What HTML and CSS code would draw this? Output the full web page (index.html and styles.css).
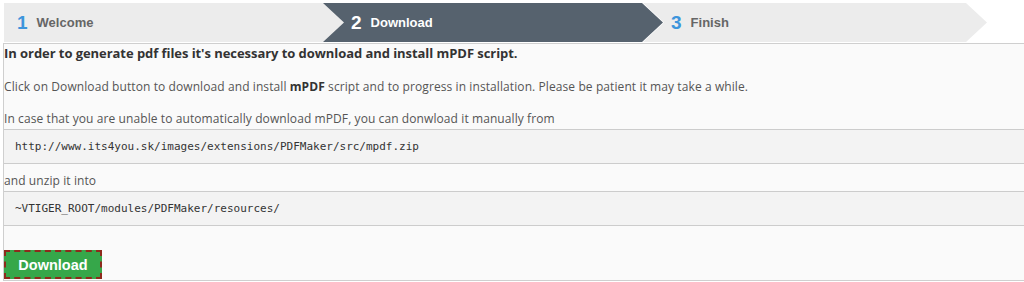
FILE: index.html
```html
<!DOCTYPE html>
<html>
<head>
<meta charset="utf-8">
<link rel="stylesheet" href="styles.css">
</head>
<body>
<div class="steps">
  <div class="step step-first"><span class="num">1</span><span class="label">Welcome</span></div>
  <div class="step step-active"><span class="num">2</span><span class="label">Download</span></div>
  <div class="step step-last"><span class="num">3</span><span class="label">Finish</span></div>
</div>
<div class="panel">
  <p class="lead">In order to generate pdf files it's necessary to download and install mPDF script.</p>
  <p class="txt t2">Click on Download button to download and install <b>mPDF</b> script and to progress in installation. Please be patient it may take a while.</p>
  <p class="txt t3">In case that you are unable to automatically download mPDF, you can donwload it manually from</p>
  <pre class="code">http://www.its4you.sk/images/extensions/PDFMaker/src/mpdf.zip</pre>
  <p class="txt t4">and unzip it into</p>
  <pre class="code">~VTIGER_ROOT/modules/PDFMaker/resources/</pre>
  <div class="actions"><button class="btn">Download</button></div>
</div>
</body>
</html>
```
FILE: styles.css
```css
html, body {
  margin: 0;
  padding: 0;
  background: #ffffff;
}
body {
  padding-top: 3px;
  font-family: "Open Sans", sans-serif;
  color: #555;
  width: 1024px;
  height: 282px;
  overflow: hidden;
}
.steps {
  display: flex;
  height: 39px;
  margin-left: 4px;
}
.step {
  flex: 0 0 340px;
  display: flex;
  align-items: center;
  box-sizing: border-box;
  padding-left: 28px;
  background: #ececec;
  margin-left: -22px;
  clip-path: polygon(0 0, calc(100% - 21px) 0, 100% 50%, calc(100% - 21px) 100%, 0 100%, 21px 50%);
  font-family: "Liberation Sans", Arial, sans-serif;
}
.step-first {
  margin-left: 0;
  padding-left: 13px;
  flex-basis: 341px;
  clip-path: polygon(0 0, calc(100% - 21px) 0, 100% 50%, calc(100% - 21px) 100%, 0 100%);
}
.step-active {
  background: #56626e;
}
.step-last {
  margin-left: -20px;
  flex-basis: 344px;
}
.num {
  font-size: 19px;
  font-weight: bold;
  color: #3d95dc;
  margin-right: 9px;
  line-height: 1;
}
.label {
  font-size: 13px;
  font-weight: bold;
  color: #666;
}
.step-active .num,
.step-active .label {
  color: #ffffff;
}
.panel {
  margin-left: 3px;
  border-left: 1px solid #cfcfcf;
  border-top: 1px solid #cfcfcf;
  border-bottom: 1px solid #cfcfcf;
  background: #fafafa;
  height: 238px;
  margin-top: 1px;
  box-sizing: border-box;
}
.lead {
  margin: 0;
  font-size: 13px;
  line-height: 18px;
  font-weight: bold;
  color: #333;
  letter-spacing: -0.06px;
}
.txt {
  margin: 0;
  font-size: 12px;
  line-height: 18px;
  color: #555;
  letter-spacing: 0.09px;
}
.txt b {
  color: #333;
}
.t2 { margin-top: 16px; }
.t3 { margin-top: 14px; }
.t4 { margin-top: 8px; }
.code {
  margin: 1px 0 0 0;
  padding: 8px 11px;
  background: #f3f3f3;
  border-top: 1px solid #cccccc;
  border-bottom: 1px solid #cccccc;
  font-family: "DejaVu Sans Mono", monospace;
  font-size: 11px;
  line-height: 17px;
  color: #333;
}
.actions {
  padding-top: 24px;
}
.btn {
  display: block;
  width: 98px;
  height: 29px;
  margin-left: 0;
  background: #36a74a;
  color: #ffffff;
  border: 2px dashed #8e2a1c;
  font-family: "Liberation Sans", Arial, sans-serif;
  font-weight: bold;
  font-size: 14.5px;
  padding: 0;
  box-sizing: border-box;
}
```
